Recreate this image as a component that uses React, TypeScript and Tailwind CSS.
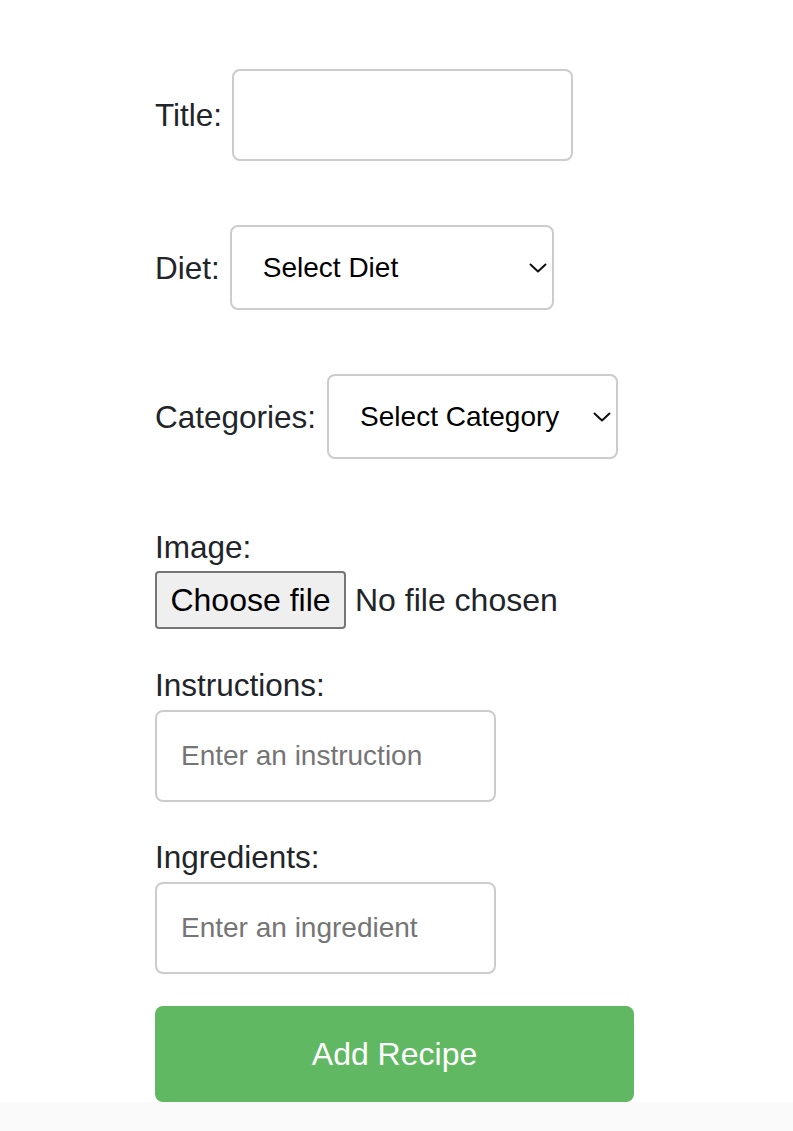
import { useState } from 'react';

function Chevron() {
  return (
    <svg
      className="pointer-events-none absolute right-[7px] top-1/2 -translate-y-1/2"
      width="18"
      height="10"
      viewBox="0 0 18 10"
      fill="none"
      stroke="#111"
      strokeWidth="2"
      strokeLinecap="round"
      strokeLinejoin="round"
    >
      <path d="M1.5 1.5 L9 8.5 L16.5 1.5" />
    </svg>
  );
}

function SelectBox({ width, placeholder }: { width: string; placeholder: string }) {
  return (
    <div className={`relative ${width}`}>
      <select
        defaultValue=""
        className="h-[85px] w-full appearance-none rounded-[8px] border-2 border-[#cccccc] bg-white pl-[31px] pr-[30px] text-[28px] text-black outline-none"
      >
        <option value="">{placeholder}</option>
      </select>
      <Chevron />
    </div>
  );
}

export default function App() {
  const [title, setTitle] = useState('');
  const [instruction, setInstruction] = useState('');
  const [ingredient, setIngredient] = useState('');

  const label = 'text-[31.5px] leading-[36px] text-[#212529]';
  const textInput =
    'h-[92px] w-[341px] rounded-[8px] border-2 border-[#cccccc] bg-white px-[24px] text-[28px] text-black outline-none placeholder:text-[#757575]';

  return (
    <div className="min-h-[1131px] bg-[#fafafa] font-['Liberation_Sans',Arial,sans-serif]">
      <div className="h-[1102px] bg-white">
        <form className="flex flex-col pl-[155px] pt-[69px]" onSubmit={(e) => e.preventDefault()}>
          <div className="flex items-center gap-[10px]">
            <label className={label}>Title:</label>
            <input className={textInput} value={title} onChange={(e) => setTitle(e.target.value)} />
          </div>

          <div className="mt-[64px] flex items-center gap-[10px]">
            <label className={label}>Diet:</label>
            <SelectBox width="w-[324px]" placeholder="Select Diet" />
          </div>

          <div className="mt-[64px] flex items-center gap-[11px]">
            <label className={label}>Categories:</label>
            <SelectBox width="w-[291px]" placeholder="Select Category" />
          </div>

          <label className={`${label} mt-[70px]`}>Image:</label>
          <div className="mt-[6px] flex items-center gap-[9px]">
            <button
              type="button"
              className="h-[58px] w-[191px] rounded-[4px] border-2 border-[#767676] bg-[#efefef] text-[32px] text-black"
            >
              Choose file
            </button>
            <span className="text-[32px] text-[#212529]">No file chosen</span>
          </div>

          <label className={`${label} mt-[38px]`}>Instructions:</label>
          <input
            className={`${textInput} mt-[7px]`}
            placeholder="Enter an instruction"
            value={instruction}
            onChange={(e) => setInstruction(e.target.value)}
          />

          <label className={`${label} mt-[37px]`}>Ingredients:</label>
          <input
            className={`${textInput} mt-[7px]`}
            placeholder="Enter an ingredient"
            value={ingredient}
            onChange={(e) => setIngredient(e.target.value)}
          />

          <button
            type="submit"
            className="mt-[32px] h-[96px] w-[479px] rounded-[8px] bg-[#61b862] text-[32px] text-white"
          >
            Add Recipe
          </button>
        </form>
      </div>
    </div>
  );
}
